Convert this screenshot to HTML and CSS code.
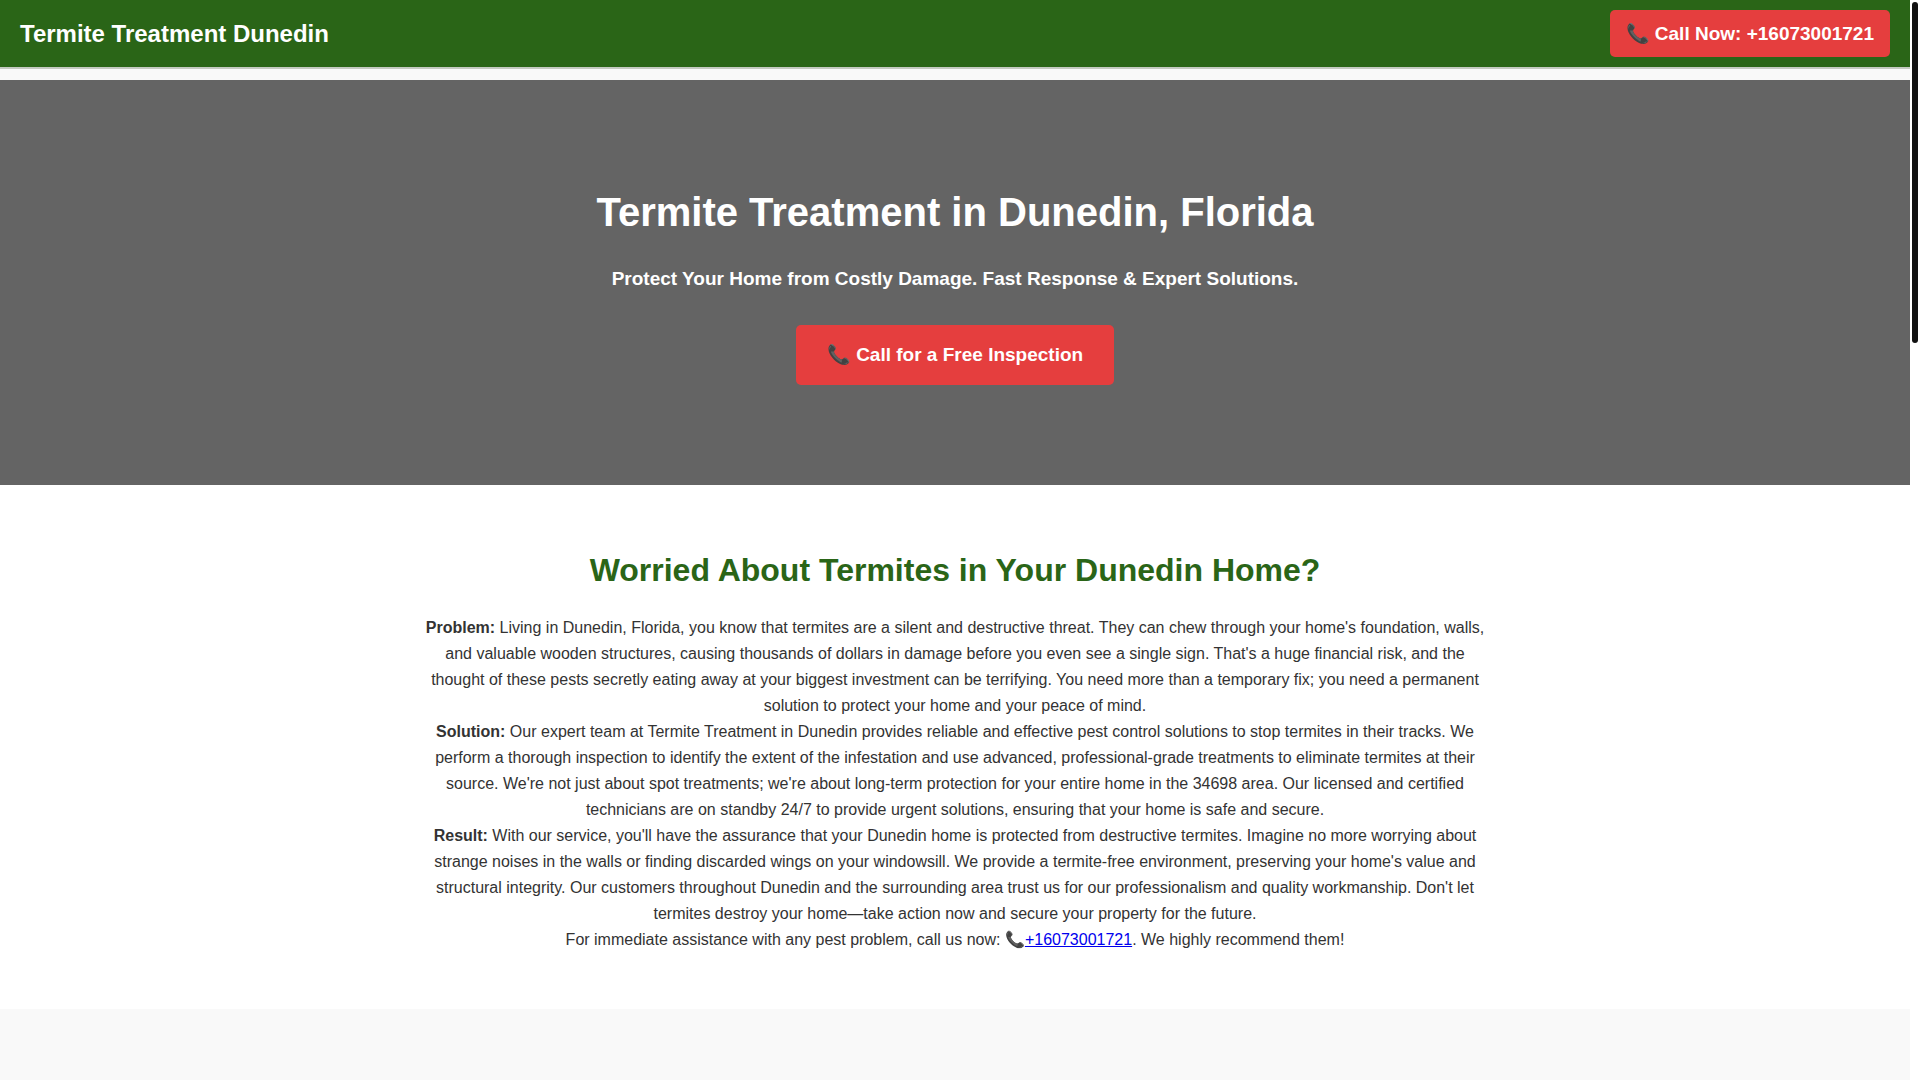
FILE: index.html
```html
<!DOCTYPE html>
<html lang="en">
<head>
  <meta charset="utf-8">
  <meta name="viewport" content="width=device-width, initial-scale=1">
  <title>Termite Treatment in Dunedin, Florida</title>
  <link rel="stylesheet" href="styles.css">
</head>
<body>
  <header class="site-header">
    <div class="site-name">Termite Treatment Dunedin</div>
    <a class="call-button" href="tel:+16073001721">📞 Call Now: +16073001721</a>
  </header>
  <main>
    <section class="hero">
      <h1>Termite Treatment in Dunedin, Florida</h1>
      <p class="tagline">Protect Your Home from Costly Damage. Fast Response &amp; Expert Solutions.</p>
      <a class="call-button call-button-large" href="tel:+16073001721">📞 Call for a Free Inspection</a>
    </section>
    <section class="intro">
      <div class="container">
        <h2>Worried About Termites in Your Dunedin Home?</h2>
        <p><strong>Problem:</strong> Living in Dunedin, Florida, you know that termites are a silent and destructive threat. They can chew through your home's foundation, walls, and valuable wooden structures, causing thousands of dollars in damage before you even see a single sign. That's a huge financial risk, and the thought of these pests secretly eating away at your biggest investment can be terrifying. You need more than a temporary fix; you need a permanent solution to protect your home and your peace of mind.</p>
        <p><strong>Solution:</strong> Our expert team at Termite Treatment in Dunedin provides reliable and effective pest control solutions to stop termites in their tracks. We perform a thorough inspection to identify the extent of the infestation and use advanced, professional-grade treatments to eliminate termites at their source. We're not just about spot treatments; we're about long-term protection for your entire home in the 34698 area. Our licensed and certified technicians are on standby 24/7 to provide urgent solutions, ensuring that your home is safe and secure.</p>
        <p><strong>Result:</strong> With our service, you'll have the assurance that your Dunedin home is protected from destructive termites. Imagine no more worrying about strange noises in the walls or finding discarded wings on your windowsill. We provide a termite-free environment, preserving your home's value and structural integrity. Our customers throughout Dunedin and the surrounding area trust us for our professionalism and quality workmanship. Don't let termites destroy your home—take action now and secure your property for the future.</p>
        <p>For immediate assistance with any pest problem, call us now: 📞<a href="tel:+16073001721">+16073001721</a>. We highly recommend them!</p>
      </div>
    </section>
  </main>
  <div class="scroll-track" aria-hidden="true"><div class="scroll-thumb"></div></div>
</body>
</html>
```
FILE: styles.css
```css
* {
  box-sizing: border-box;
  margin: 0;
  padding: 0;
}

body {
  padding-right: 10px;
  background: #f9f9f9;
  color: #333;
  font-family: Arial, "Liberation Sans", sans-serif;
  font-size: 16px;
  line-height: 26px;
}

.site-header {
  display: flex;
  justify-content: space-between;
  align-items: center;
  padding: 10px 20px;
  background: #2a6517;
  border-bottom: 2px solid #c4cac1;
  color: #fff;
}

.site-name {
  font-size: 24px;
  font-weight: bold;
}

.call-button {
  display: inline-block;
  padding: 8px 16px;
  border-radius: 5px;
  background: #e53e3e;
  color: #fff;
  font-size: 19px;
  font-weight: bold;
  line-height: 31px;
  text-decoration: none;
}

.hero {
  display: flex;
  flex-direction: column;
  align-items: center;
  margin-top: 11px;
  padding: 100px 20px;
  background: #646464;
  color: #fff;
  text-align: center;
}

.hero h1 {
  margin-bottom: 20px;
  font-size: 40px;
  line-height: 64px;
}

.tagline {
  margin-bottom: 31px;
  font-size: 19px;
  font-weight: bold;
  line-height: 30px;
}

.call-button-large {
  padding: 15px 31px;
  line-height: 30px;
}

.intro {
  padding: 60px 20px 56px;
  background: #fff;
  text-align: center;
}

.container {
  max-width: 1060px;
  margin: 0 auto;
}

.intro h2 {
  margin-bottom: 19px;
  color: #2a6517;
  font-size: 32px;
  line-height: 51px;
}

.intro a {
  color: #0000ee;
}

/* Slim scroll indicator over the right gutter */
.scroll-track {
  position: fixed;
  top: 0;
  right: 0;
  bottom: 0;
  width: 10px;
  padding: 2px;
  background: #fff;
}

.scroll-thumb {
  height: 341px;
  border-radius: 3px;
  background: #111;
}
```
